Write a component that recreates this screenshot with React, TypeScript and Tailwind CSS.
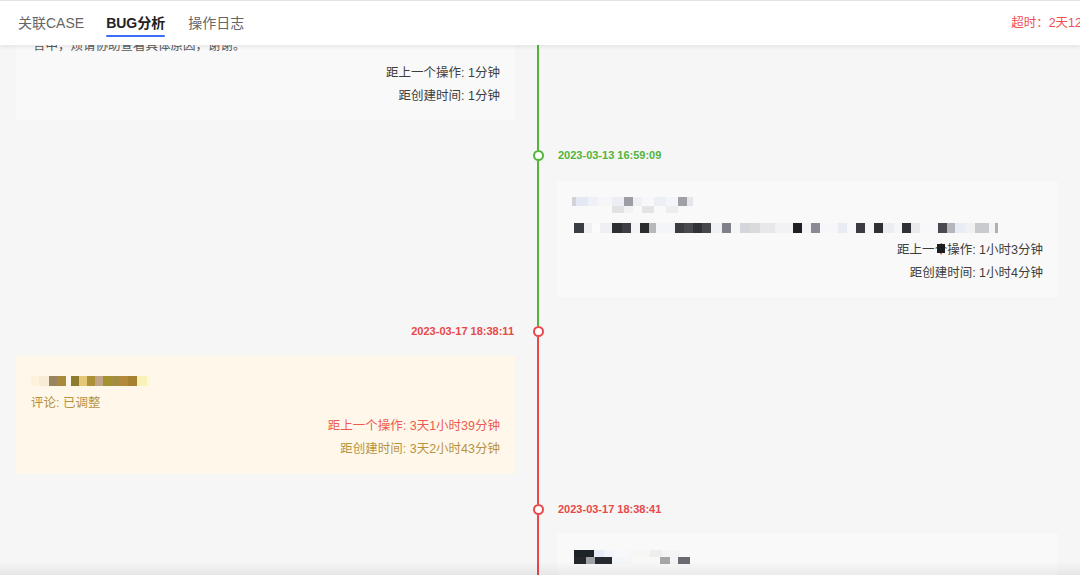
import React from 'react';

type Block = [number, string];

const GREEN = 'bg-[#52b43a]';
const RED = 'bg-[#e8484a]';

// pixelated (masked) text, drawn as coloured blocks
const Mosaic: React.FC<{ rows: Block[][]; heights: number[]; className?: string }> = ({ rows, heights, className }) => (
  <div className={`flex flex-col ${className ?? ''}`}>
    {rows.map((row, i) => (
      <div key={i} className="flex">
        {row.map(([w, c], j) => (
          <span key={j} style={{ width: w, height: heights[i], background: c }} />
        ))}
      </div>
    ))}
  </div>
);

interface RowProps {
  left?: React.ReactNode;
  right?: React.ReactNode;
  top: string;
  bottom?: string;
  dot?: string;
  className?: string;
}

const Row: React.FC<RowProps> = ({ left, right, top, bottom, dot, className }) => (
  <div className={`grid grid-cols-[499px_42px_501px] ${className ?? ''}`}>
    <div>{left}</div>
    <div className="flex flex-col">
      <div className={`ml-[22px] w-0.5 flex-1 ${top}`} />
      {dot && (
        <>
          <div className={`ml-[18px] h-[11px] w-[11px] rounded-full border-2 bg-white ${dot}`} />
          <div className={`ml-[22px] w-0.5 flex-1 ${bottom ?? top}`} />
        </>
      )}
    </div>
    <div>{right}</div>
  </div>
);

const mosaicA1: Block[] = [
  [4, '#d0d3da'], [12, '#e4e8f5'], [10, '#eff1f7'], [14, '#f6f6f8'], [12, '#eceef3'],
  [9, '#9c9da5'], [9, '#eef0f4'], [12, '#f8f8fa'], [12, '#eceff6'], [12, '#f4f5f8'],
  [9, '#a0a1a8'], [6, '#e6e6ea'],
];
const mosaicA1b: Block[] = [
  [4, '#f9f9f9'], [12, '#f9f9f9'], [10, '#f9f9f9'], [14, '#f9f9f9'], [12, '#e2e2e5'],
  [9, '#f2f2f4'], [9, '#f9f9f9'], [12, '#e4e4e7'], [12, '#f9f9f9'], [12, '#eeeef0'],
];
const mosaicA2: Block[] = [
  [10, '#3a3d44'], [8, '#f0f0f2'], [8, '#fbfbfc'], [12, '#eef0f4'], [10, '#2c2e33'], [9, '#3c3e44'],
  [9, '#f4f4f6'], [9, '#2a2c30'], [7, '#b8b8bb'], [19, '#f4f5f8'], [9, '#3a3c42'], [9, '#484a50'],
  [9, '#303238'], [9, '#45474c'], [11, '#f0f1f4'], [9, '#808188'], [9, '#f6f6f8'], [10, '#d4d6dc'],
  [10, '#dadadd'], [15, '#e8e8ea'], [18, '#f2f2f4'], [9, '#1f2024'], [9, '#f4f4f6'], [9, '#8a8b92'],
  [18, '#f7f7f9'], [9, '#e9ebf2'], [9, '#f8f8fa'], [9, '#3a3c42'], [9, '#f6f6f8'], [9, '#2e3034'],
  [11, '#ebedf2'], [8, '#f6f6f8'], [9, '#2f3136'], [9, '#e8eaee'], [18, '#f8f8fa'], [9, '#484a50'],
  [8, '#b4b6bc'], [10, '#e8ecf5'], [10, '#f1f1f3'], [14, '#c9cacd'], [6, '#f4f4f6'], [3, '#b0b0b4'],
];
const mosaicY: Block[] = [
  [8, '#fdf3dc'], [10, '#f8ecd4'], [8, '#9a8460'], [9, '#a88a3c'], [5, '#fff8ea'], [8, '#8e7b2e'],
  [8, '#e4c878'], [8, '#ad9038'], [8, '#c2a486'], [8, '#a3922e'], [8, '#a48c42'], [9, '#b48a3a'],
  [9, '#a88032'], [10, '#faf1b8'], [4, '#fdf6e0'],
];
const mosaicB1: Block[] = [
  [20, '#1e2229'], [10, '#e8ecf6'], [10, '#f4f5fa'], [16, '#f8f8fa'], [20, '#f6f7f4'], [12, '#eeeeee'], [18, '#f4f4f4'],
];
const mosaicB2: Block[] = [
  [12, '#24272d'], [9, '#a0a2a6'], [17, '#262a30'], [20, '#f4f5f7'], [28, '#f8f8f6'], [10, '#a4a6aa'], [8, '#f4f4f4'], [12, '#6a6c72'],
];
const mosaicB3: Block[] = [
  [6, '#f9f9f9'], [8, '#dcdcde'], [10, '#f0f0f2'], [8, '#d8d8da'], [14, '#f6f6f7'], [9, '#e0e0e2'], [20, '#f7f7f8'], [8, '#dedee0'], [12, '#f2f2f4'], [8, '#e2e2e4'],
];

export default function App() {
  return (
    <div className="relative flex h-[575px] w-[1080px] flex-col overflow-hidden bg-[#f6f6f6] font-['Liberation_Sans','Noto_Sans_CJK_SC',sans-serif]">
      {/* tabs */}
      <header className="relative z-10 flex h-[45px] shrink-0 items-center border-t border-[#e4e4e4] bg-white pl-[18px] text-[14px] leading-[21px] shadow-[0_2px_4px_rgba(0,0,0,0.07)]">
        <span className="text-[#666]">关联CASE</span>
        <span className="relative ml-[22px] font-semibold text-[#222]">
          BUG分析
          <span className="absolute -bottom-[3px] left-0 h-[2px] w-full rounded-full bg-[#3b6ef5]" />
        </span>
        <span className="ml-[23px] text-[#666]">操作日志</span>
        <span className="ml-auto -mr-[27px] whitespace-nowrap text-[12.5px] text-[#f04f4f]">超时：2天12小时</span>
      </header>

      <div className="flex-1 overflow-hidden pl-4 text-[12.5px] leading-[23px]">
        <Row
          className="-mt-[22px]"
          top={GREEN}
          left={
            <div className="bg-[#f9f9f9] px-[15px] py-3 text-[#3d3d3d]">
              <p className="mb-1 pl-[2px] text-[#5a5a5a]">合中，烦请协助查看具体原因，谢谢。</p>
              <p className="text-right">距上一个操作: 1分钟</p>
              <p className="text-right">距创建时间: 1分钟</p>
            </div>
          }
        />
        <Row className="h-[25px]" top={GREEN} />
        <Row
          className="h-5"
          top={GREEN}
          dot="border-[#52b43a]"
          right={<div className="pl-px text-[11px] font-bold leading-5 text-[#52b43a]">2023-03-13 16:59:09</div>}
        />
        <Row className="h-4" top={GREEN} />
        <Row
          top={GREEN}
          right={
            <div className="w-[501px] bg-[#f9f9f9] px-[15px] py-3 text-[#3d3d3d]">
              <div className="flex h-[23px] items-center">
                <Mosaic rows={[mosaicA1, mosaicA1b]} heights={[9, 7]} />
              </div>
              <div className="flex h-[23px] items-center pl-[2px]">
                <Mosaic rows={[mosaicA2]} heights={[10]} />
              </div>
              <p className="text-right">
                距上一
                <span className="relative">
                  个<span className="absolute left-[2px] top-[1px] h-[9px] w-2 bg-[#1c1d21]" />
                </span>
                操作: 1小时3分钟
              </p>
              <p className="text-right">距创建时间: 1小时4分钟</p>
            </div>
          }
        />
        <Row className="h-6" top={GREEN} />
        <Row
          className="h-5"
          top={GREEN}
          bottom={RED}
          dot="border-[#e8484a]"
          left={<div className="pr-px text-right text-[11px] font-bold leading-5 text-[#e8484a]">2023-03-17 18:38:11</div>}
        />
        <Row className="h-[15px]" top={RED} />
        <Row
          top={RED}
          left={
            <div className="bg-[#fff8ea] px-[15px] py-[13px] text-[#b8923e]">
              <div className="flex h-[23px] items-center">
                <Mosaic rows={[mosaicY]} heights={[10]} />
              </div>
              <p>评论: 已调整</p>
              <p className="text-right text-[#ec5a50]">距上一个操作: 3天1小时39分钟</p>
              <p className="text-right">距创建时间: 3天2小时43分钟</p>
            </div>
          }
        />
        <Row className="h-[25px]" top={RED} />
        <Row
          className="h-5"
          top={RED}
          dot="border-[#e8484a]"
          right={<div className="pl-px text-[11px] font-bold leading-5 text-[#e8484a]">2023-03-17 18:38:41</div>}
        />
        <Row className="h-[14px]" top={RED} />
        <Row
          top={RED}
          right={
            <div className="w-[501px] bg-[#f9f9f9] px-[15px] py-3 text-[#3d3d3d]">
              <div className="flex h-[23px] items-center pl-[2px]">
                <Mosaic rows={[mosaicB1, mosaicB2]} heights={[7, 7]} />
              </div>
              <div className="flex h-[23px] items-center pl-[2px]">
                <Mosaic rows={[mosaicB3]} heights={[8]} />
              </div>
            </div>
          }
        />
      </div>

      {/* bottom window edge */}
      <div className="pointer-events-none absolute inset-x-0 bottom-0 h-[14px] bg-linear-to-b from-transparent to-[#00000010]" />
    </div>
  );
}
